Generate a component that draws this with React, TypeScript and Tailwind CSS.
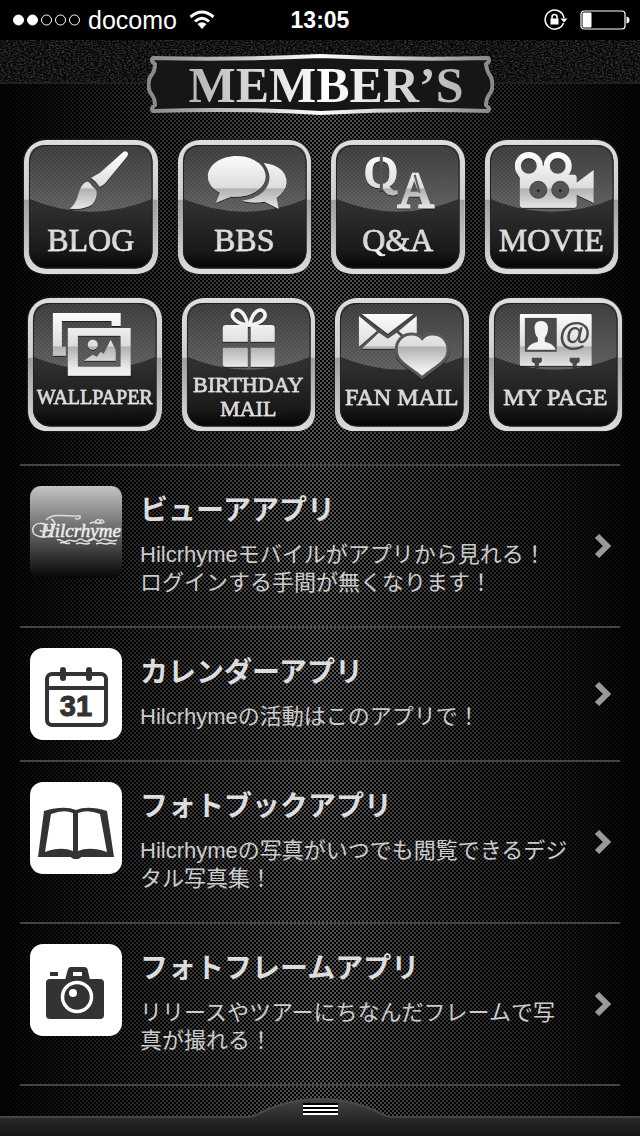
import type { ReactNode } from "react";

interface MenuItem {
  label: string[];
  size: string;
  icon: ReactNode;
}

interface AppItem {
  title: string;
  lines: string[];
  icon: ReactNode;
}

const METAL = "url(#metal)";
const SERIF = "Liberation Serif, serif";

const MENU_TOP: MenuItem[] = [
  {
    label: ["BLOG"],
    size: "text-[32px] leading-8",
    icon: (
      <g fill={METAL}>
        <path d="M98.5 13Q101 10 103.5 12Q105.5 14 103 17L85 39Q80 46 76 47Q73 42 67.5 38Q72 35 76 33Z" />
        <path d="M63 42Q66 42 68 46Q72 49 73 52Q73 60 68 65Q60 70 46 69Q52 64 54 56Q57 44 63 42Z" />
      </g>
    ),
  },
  {
    label: ["BBS"],
    size: "text-[32px] leading-8",
    icon: (
      <g fill={METAL}>
        <path d="M86 23Q109 26 109 43Q108 52 99 58L101 69L87 62Q74 64 64 61Q91 57 92 37Q91 29 86 23Z" />
        <path d="M59 16C75 16 88 25 88 36.500C88 48 75 57 59 57Q56 57 53 57L38 63L42 53C34 49 30 43 30 36.500C30 25 43 16 59 16Z" />
      </g>
    ),
  },
  {
    label: ["Q&A"],
    size: "text-[32px] leading-8",
    icon: (
      <g fontFamily={SERIF} fill={METAL} stroke={METAL} strokeWidth="2.500">
        <text x="34" y="47" fontSize="45">Q</text>
        <path d="M50.500 14V51" stroke="#555" strokeWidth="3" />
        <text x="67" y="67" fontSize="50">A</text>
        <path d="M84 35L89 53" stroke="#5b5b5b" strokeWidth="2" />
      </g>
    ),
  },
  {
    label: ["MOVIE"],
    size: "text-[32px] leading-8",
    icon: (
      <>
        <g fill="none" stroke={METAL} strokeWidth="6">
          <circle cx="44" cy="26" r="11" />
          <circle cx="73" cy="26" r="11" />
        </g>
        <path fill={METAL} d="M33 35H88Q92 34 92 38V43L109 30V63L92 55V65Q92 68 89 68H38Q35 68 35 65V38Z" />
        <path fill={METAL} d="M53 26H64V36H53Z" />
        <g fill="#555" stroke="#444" strokeWidth="1">
          <circle cx="53.500" cy="50" r="8.500" />
          <circle cx="75.500" cy="50" r="8.500" />
        </g>
        <circle cx="53.500" cy="51" r="1.500" fill="#222" />
        <circle cx="75.500" cy="51" r="1.500" fill="#222" />
      </>
    ),
  },
];

const MENU_BOTTOM: MenuItem[] = [
  {
    label: ["WALLPAPER"],
    size: "text-[20px] leading-6",
    icon: (
      <g fill={METAL}>
        <path d="M25 15H93V28H84V23H34V49H38V58H25Z" />
        <path fillRule="evenodd" d="M40 30H103V78H40ZM50 38V69H93V38Z" />
        <circle cx="65" cy="47" r="5" />
        <path d="M56 63L65 57L69 59L73 54L76 56L83 42L88 52V63Z" />
      </g>
    ),
  },
  {
    label: ["BIRTHDAY", "MAIL"],
    size: "text-[22px] leading-6",
    icon: (
      <>
        <g fill="none" stroke="#f4f4f4" strokeWidth="3.500">
          <path d="M66 27C55 26 49 20 51 15C54 9 63 12 66 27Z" />
          <path d="M68 27C79 26 85 20 83 15C80 9 71 12 68 27Z" />
        </g>
        <g fill={METAL}>
          <path d="M44 27H66V44H41V30Q41 27 44 27Z" />
          <path d="M69 27H90Q93 27 93 30V44H69Z" />
          <path d="M41 50H66V69H44Q41 69 41 66Z" />
          <path d="M69 50H93V66Q93 69 90 69H69Z" />
        </g>
      </>
    ),
  },
  {
    label: ["FAN MAIL"],
    size: "text-[24px] leading-6",
    icon: (
      <>
        <path fill={METAL} d="M27 16H79L53 36Z" />
        <path fill={METAL} d="M24 18L42 33L24 49Z" />
        <path fill={METAL} d="M82 18V49L64 33Z" />
        <path fill={METAL} d="M27 51L44 35L53 41L62 35L79 51Z" />
        <path
          fill={METAL}
          stroke="#585858"
          strokeWidth="6"
          paintOrder="stroke"
          d="M87.500 43C82 34 63 36 63 52C63 63 74 67 87.500 78C101 67 112 63 112 52C112 36 93 34 87.500 43Z"
        />
      </>
    ),
  },
  {
    label: ["MY PAGE"],
    size: "text-[24px] leading-6",
    icon: (
      <>
        <rect x="31" y="16" width="72" height="52" rx="1" fill={METAL} />
        <rect x="36" y="20" width="32" height="34" fill="#4c4c4c" />
        <path fill="#f2f2f2" d="M52 23C58 23 60 28 59 33Q58 38 56 40V44Q65 46 67 52H38Q40 46 49 44V40Q46 37 46 32C45 27 47 23 52 23Z" />
        <text x="70" y="47" fontFamily="Liberation Sans, sans-serif" fontWeight="bold" fontSize="33" fill="#4c4c4c">@</text>
        <path fill="#484848" d="M43 60H53V64L50 66V69H46V66L43 64ZM81 60H91V64L88 66V69H84V66L81 64Z" />
      </>
    ),
  },
];

const APPS: AppItem[] = [
  {
    title: "ビューアアプリ",
    lines: ["Hilcrhymeモバイルがアプリから見れる！", "ログインする手間が無くなります！"],
    icon: (
      <>
        <rect width="92" height="92" rx="11" fill="url(#viewer)" />
        <text x="11" y="51" fontFamily={SERIF} fontStyle="italic" fontSize="19" fill="#eee" stroke="#eee" strokeWidth="0.500">Hilcrhyme</text>
        <g fill="none" stroke="#ddd" strokeWidth="1.500">
          <path d="M20 50C8 53 1 48 3 42C5 36 15 36 17 41C18 45 12 47 10 44" />
          <path d="M16 34C24 26 38 31 50 30C51 33 47 34 45 32M21 33C30 37 20 48 18 51" />
          <path d="M60 38C62 33 70 40 74 36C72 32 69 34 71 38M66 38C64 34 69 32 70 35" />
          <path d="M27 54C32 52 32 58 37 55S44 58 48 54S55 59 60 54S67 58 71 54S79 58 87 54M30 57C35 55 36 59 40 57M46 58C52 55 54 60 60 57M66 58C72 55 74 60 80 57L86 58" />
        </g>
      </>
    ),
  },
  {
    title: "カレンダーアプリ",
    lines: ["Hilcrhymeの活動はこのアプリで！"],
    icon: (
      <>
        <rect width="92" height="92" rx="13" fill="#fff" />
        <rect x="17" y="26" width="59" height="51" rx="5" fill="none" stroke="#333" strokeWidth="4" />
        <path d="M17 40H76" stroke="#333" strokeWidth="4" />
        <path d="M33 22V30M59 22V30" stroke="#333" strokeWidth="6" strokeLinecap="round" />
        <text x="46" y="68" textAnchor="middle" fontFamily="Liberation Sans, sans-serif" fontWeight="bold" fontSize="29" fill="#333" stroke="#333">31</text>
      </>
    ),
  },
  {
    title: "フォトブックアプリ",
    lines: ["Hilcrhymeの写真がいつでも閲覧できるデジタル写真集！"],
    icon: (
      <>
        <rect width="92" height="92" rx="13" fill="#fff" />
        <path fill="#333" d="M14 29Q34 23 46 28Q58 23 77 29L84 75H51Q50 77 46 77Q42 77 41 75H8Z" />
        <path fill="#fff" d="M21 32Q34 27 43 31V69Q31 64 15 70Z" />
        <path fill="#fff" d="M70 32Q58 27 48 31V69Q60 64 77 70Z" />
      </>
    ),
  },
  {
    title: "フォトフレームアプリ",
    lines: ["リリースやツアーにちなんだフレームで写真が撮れる！"],
    icon: (
      <>
        <rect width="92" height="92" rx="13" fill="#fff" />
        <rect x="16" y="35" width="58" height="40" rx="4" fill="#333" />
        <path fill="#333" d="M35 36L38 25Q38.500 23 41 23H54Q57 23 57.500 25L60 36Z" />
        <rect x="43" y="28" width="9" height="4" fill="#fff" />
        <rect x="20" y="28" width="8" height="4" fill="#333" />
        <circle cx="47" cy="53" r="14.500" fill="#333" stroke="#fff" strokeWidth="3.500" />
        <circle cx="43" cy="49" r="4" fill="#fff" />
      </>
    ),
  },
];

function StatusBar() {
  return (
    <div className="grid h-10 grid-cols-[1fr_auto_1fr] items-center bg-black font-['Liberation_Sans',sans-serif] text-white">
      <div className="flex items-center pl-3">
        <svg width="70" height="14" viewBox="0 0 70 14" aria-hidden="true">
          <g stroke="#fff" fill="none">
            <circle cx="6.500" cy="7" r="5" fill="#fff" />
            <circle cx="20.500" cy="7" r="5" fill="#fff" />
            <circle cx="34.500" cy="7" r="5" />
            <circle cx="48.500" cy="7" r="5" />
            <circle cx="62.500" cy="7" r="5" />
          </g>
        </svg>
        <span className="ml-1.5 text-[25px] leading-10">docomo</span>
        <svg className="ml-3" width="26" height="20" viewBox="0 0 26 20" aria-hidden="true">
          <g fill="none" stroke="#fff" strokeWidth="3">
            <path d="M1.500 7Q13 -3 24.500 7" />
            <path d="M6 11.500Q13 5 20 11.500" />
          </g>
          <path d="M8.500 14Q13 10.500 17.500 14L13 19Z" fill="#fff" />
        </svg>
      </div>
      <span className="text-[23px] font-bold leading-10">13:05</span>
      <div className="flex items-center justify-end gap-3 pr-2.5">
        <svg width="24" height="22" viewBox="0 0 24 22" aria-hidden="true">
          <path d="M19.500 14A9.500 9.500 0 1 1 20 9" fill="none" stroke="#fff" strokeWidth="1.500" />
          <path d="M16.500 9.500H23.500L20 13.500Z" fill="#fff" />
          <rect x="6.500" y="9.500" width="8" height="6" fill="#fff" />
          <path d="M8 10V8Q8 5.500 10.500 5.500Q13 5.500 13 8V10" fill="none" stroke="#fff" strokeWidth="1.500" />
        </svg>
        <svg width="50" height="20" viewBox="0 0 50 20" aria-hidden="true">
          <rect x="1" y="1" width="44" height="18" rx="3" fill="none" stroke="#fff" strokeWidth="1.200" />
          <rect x="2.500" y="2.500" width="9" height="15" rx="1" fill="#fff" />
          <path d="M46.500 6.500Q49.500 7 49.500 10T46.500 13.500Z" fill="#fff" />
        </svg>
      </div>
    </div>
  );
}

function Header() {
  return (
    <header className="relative flex h-[100px] justify-center pt-3.5">
      <svg className="absolute left-0 top-0 h-11 w-full border-b-2 border-[#1f1f1f] bg-[#0a0a0a]" aria-hidden="true">
        <filter id="grain" colorInterpolationFilters="sRGB">
          <feTurbulence type="fractalNoise" baseFrequency="0.45 0.75" numOctaves="2" seed="4" />
          <feColorMatrix values="0.5 0 0 0 -0.17  0.5 0 0 0 -0.17  0.5 0 0 0 -0.17  0 0 0 0 1" />
        </filter>
        <rect width="100%" height="42" filter="url(#grain)" />
      </svg>
      <div className="relative flex h-[61px] w-[347px] items-center justify-center pl-3">
        <svg className="absolute inset-0" width="347" height="61" viewBox="0 0 347 61" aria-hidden="true">
          <path
            d="M6 4Q90 6 173.500 2Q257 6 341 4Q344 7 339 10Q340 18 344 23Q347 31 344 38Q339 44 339 51Q344 55 341 57Q257 54 173.500 59Q90 54 6 57Q3 55 8 51Q8 44 3 38Q0 31 3 23Q8 18 8 10Q3 7 6 4Z"
            fill="#161616"
            stroke="url(#plate)"
            strokeWidth="4"
            strokeLinejoin="round"
          />
        </svg>
        <h1 className="relative bg-linear-to-r from-[#b5b5b5] via-white to-[#b5b5b5] bg-clip-text font-['Liberation_Serif',serif] text-[50px] font-bold leading-[60px] text-transparent">
          MEMBER’S
        </h1>
      </div>
    </header>
  );
}

function Tile({ item }: { item: MenuItem }) {
  return (
    <a
      href="#"
      className="relative flex aspect-square flex-col rounded-[22px] bg-linear-to-b from-[#dedede] from-0% via-[#cfcfcf] via-44% to-[#dcdcdc] p-[5px] shadow-[0_0_2px_1px_#222]"
    >
      <svg className="absolute inset-0 size-full" viewBox="0 0 134 134" aria-hidden="true">
        <path d="M0 60H5V112Q5 129 22 129H112Q129 129 129 112V60H134V112Q134 134 112 134H22Q0 134 0 112Z" fill="url(#rim)" />
        <rect x="5" y="5" width="124" height="124" rx="17" fill="url(#base)" />
        <path d="M5 59V22Q5 5 22 5H112Q129 5 129 22V59Q67 85 5 59Z" fill="url(#gloss)" />
        <rect x="5" y="5" width="124" height="124" rx="17" fill="url(#mesh)" />
        <rect x="5.500" y="5.500" width="123" height="123" rx="16.500" fill="none" stroke="#222" />
        <g filter="url(#drop)">{item.icon}</g>
      </svg>
      <span className="relative mt-auto flex h-[58px] flex-col items-center justify-center whitespace-nowrap font-['Liberation_Serif',serif]">
        {item.label.map((line) => (
          <span
            key={line}
            className={`${item.size} bg-linear-to-b from-[#e8e8e8] via-[#d0d0d0] to-white bg-clip-text text-transparent [-webkit-text-stroke:0.5px_#ddd]`}
          >
            {line}
          </span>
        ))}
      </span>
    </a>
  );
}

function AppRow({ app }: { app: AppItem }) {
  return (
    <li className="border-t-2 border-[#444]">
      <a href="#" className="flex items-center py-5 pl-2.5 pr-2">
        <svg className="shrink-0 self-start" width="92" height="92" viewBox="0 0 92 92" aria-hidden="true">
          {app.icon}
        </svg>
        <div className="ml-[18px] flex-1 pb-[9px] pt-[5px] font-['Liberation_Sans','Noto_Sans_CJK_JP',sans-serif]">
          <h2 className="text-[28px] font-bold leading-10 text-[#ddd]">{app.title}</h2>
          <div className="mt-2.5 text-[22px] leading-7 text-[#ccc]">
            {app.lines.map((line) => (
              <p key={line}>{line}</p>
            ))}
          </div>
        </div>
        <svg className="ml-[18px] shrink-0" width="18" height="26" viewBox="0 0 18 26" aria-hidden="true">
          <path d="M3 3L13 13L3 23" fill="none" stroke="#999" strokeWidth="6" />
        </svg>
      </a>
    </li>
  );
}

function Defs() {
  return (
    <svg className="absolute size-0" aria-hidden="true">
      <defs>
        <linearGradient id="metal" gradientUnits="userSpaceOnUse" x1="0" y1="12" x2="0" y2="78">
          <stop offset="0" stopColor="#fff" />
          <stop offset="0.550" stopColor="#dcdcdc" />
          <stop offset="0.560" stopColor="#b0b0b0" />
          <stop offset="0.900" stopColor="#eee" />
        </linearGradient>
        <linearGradient id="rim" x1="0" y1="0" x2="0" y2="1">
          <stop offset="0" stopColor="#a0a0a0" />
          <stop offset="1" stopColor="#dcdcdc" />
        </linearGradient>
        <linearGradient id="base" x1="0" y1="0" x2="0" y2="1">
          <stop offset="0.500" stopColor="#333" />
          <stop offset="0.850" stopColor="#1c1c1c" />
          <stop offset="1" stopColor="#050505" />
        </linearGradient>
        <linearGradient id="gloss" x1="0" y1="0" x2="0" y2="1">
          <stop offset="0" stopColor="#444" />
          <stop offset="1" stopColor="#696969" />
        </linearGradient>
        <linearGradient id="plate">
          <stop offset="0" stopColor="#888" />
          <stop offset="0.500" stopColor="#fff" />
          <stop offset="1" stopColor="#888" />
        </linearGradient>
        <linearGradient id="viewer" x1="0" y1="0" x2="0" y2="1">
          <stop offset="0" stopColor="#c4c4c4" />
          <stop offset="1" stopColor="#050505" />
        </linearGradient>
        <pattern id="mesh" width="4" height="4" patternUnits="userSpaceOnUse">
          <path d="M0 0H2V2H0ZM2 2H4V4H2Z" fill="#000" opacity="0.150" />
        </pattern>
        <filter id="drop" x="-10%" y="-10%" width="120%" height="120%">
          <feDropShadow dx="0" dy="1" stdDeviation="0.800" floodColor="#111" floodOpacity="0.800" />
        </filter>
      </defs>
    </svg>
  );
}

function Footer() {
  return (
    <footer className="relative mt-[30px] flex h-5 justify-center border-t-2 border-[#444] bg-linear-to-b from-[#2a2a2a] to-[#151515]">
      <button type="button" aria-label="Menu" className="absolute bottom-0 h-[38px] w-36">
        <svg width="144" height="38" viewBox="0 0 144 38" aria-hidden="true">
          <path d="M0 19Q5 19 12 15Q40 1 72 1T132 15Q139 19 144 19V38H0Z" fill="url(#tab)" />
          <path d="M0 19Q5 19 12 15Q40 1 72 1T132 15Q139 19 144 19" fill="none" stroke="#4a4a4a" strokeWidth="2" />
          <rect x="55" y="5" width="35" height="12" fill="#000" />
          <path d="M55 8H90M55 12H90M55 16H90" stroke="#fff" strokeWidth="2" />
          <linearGradient id="tab" x1="0" y1="0" x2="0" y2="1">
            <stop offset="0" stopColor="#444" />
            <stop offset="0.500" stopColor="#2a2a2a" />
            <stop offset="1" stopColor="#151515" />
          </linearGradient>
        </svg>
      </button>
    </footer>
  );
}

export default function App() {
  return (
    <div className="min-h-screen bg-black bg-[linear-gradient(to_right,rgba(0,0,0,0.95),transparent_50%,rgba(0,0,0,0.95)),conic-gradient(#555_25%,#000_0_50%,#555_0_75%,#000_0)] bg-[length:100%_100%,4px_4px]">
      <Defs />
      <StatusBar />
      <Header />
      <main>
        <nav>
          <div className="grid grid-cols-4 gap-5 pl-6 pr-[22px]">
            {MENU_TOP.map((item) => (
              <Tile key={item.label[0]} item={item} />
            ))}
          </div>
          <div className="mt-6 grid grid-cols-4 gap-5 pl-7 pr-[18px]">
            {MENU_BOTTOM.map((item) => (
              <Tile key={item.label[0]} item={item} />
            ))}
          </div>
        </nav>
        <ul className="mx-5 mt-[33px] border-b-2 border-[#444]">
          {APPS.map((app) => (
            <AppRow key={app.title} app={app} />
          ))}
        </ul>
      </main>
      <Footer />
    </div>
  );
}
